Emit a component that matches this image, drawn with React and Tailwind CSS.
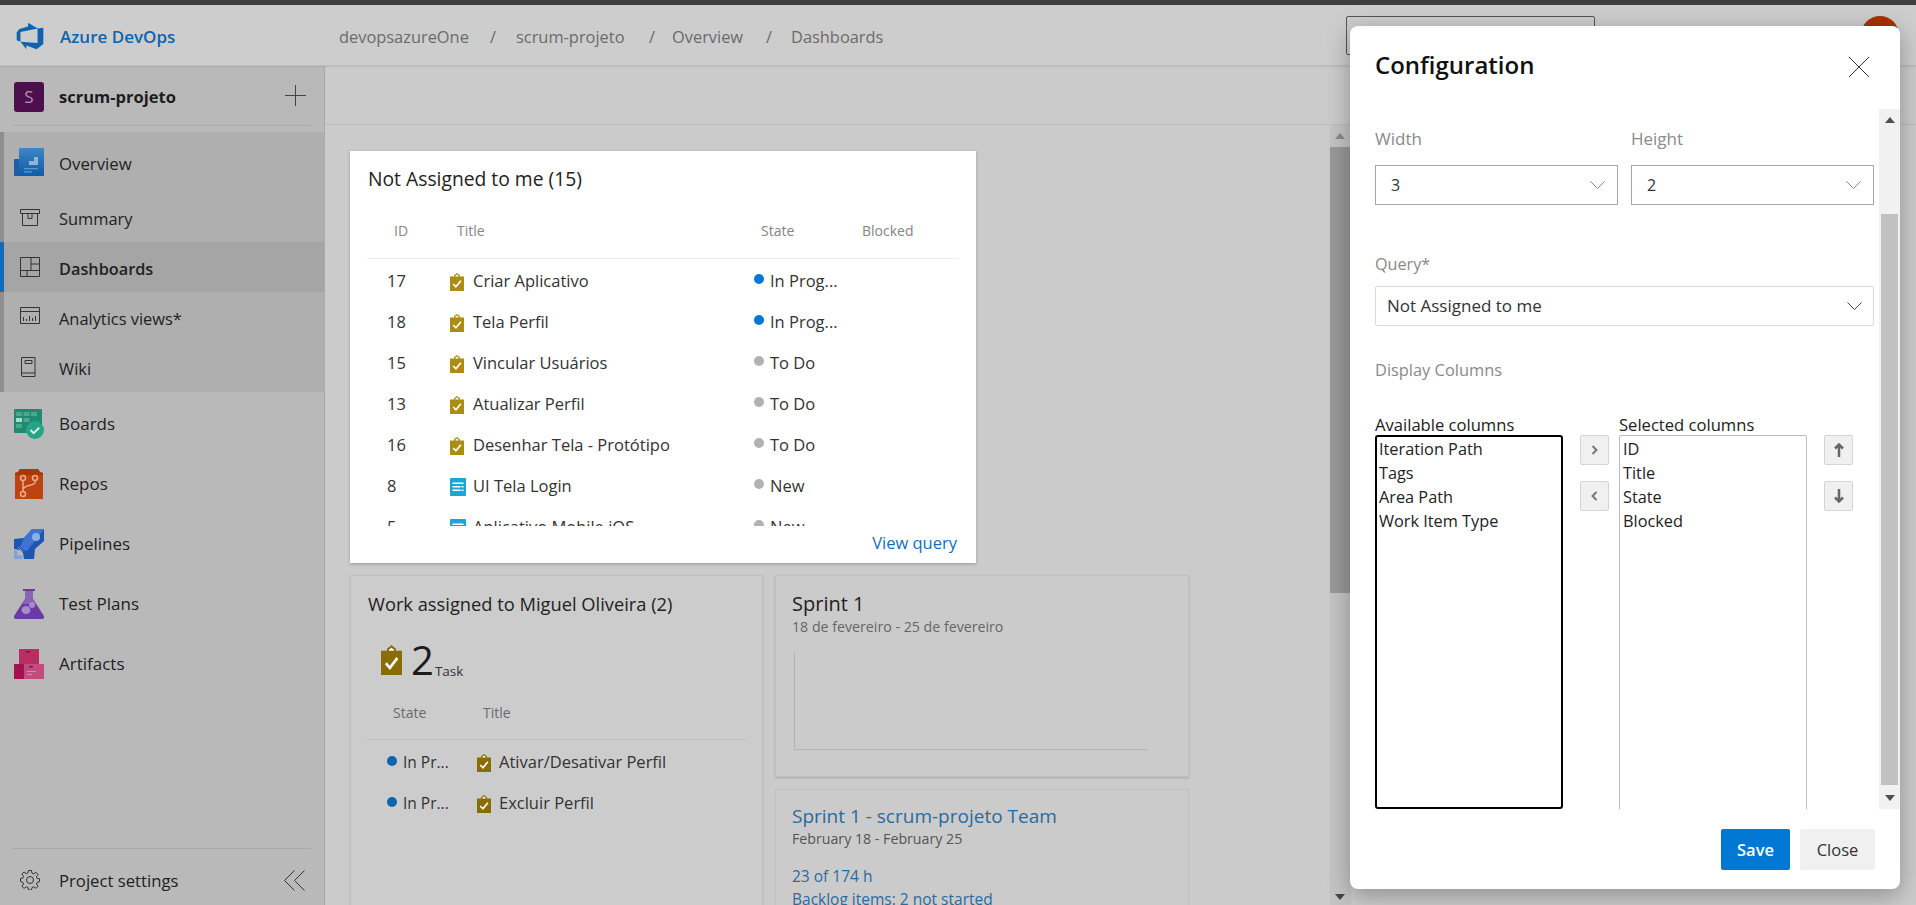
import React from "react";

const F = { fontFamily: '"Open Sans","Noto Sans",sans-serif' };

const Task = ({ w = 14, h = 18, c = "#ab8d12" }) => (
  <svg width={w} height={h} viewBox="0 0 14 18" preserveAspectRatio="none" className="shrink-0">
    <path d="M0 3.500h4V2.200L7 0l3 2.200v1.300h4V18H0z" fill={c} />
    <path d="M5.300 3.500V2.800L7 1.600l1.700 1.200v.7z" fill="#fff" />
    <path d="M3.200 11l2.700 2.800 5-6" fill="none" stroke="#fff" strokeWidth="1.700" />
  </svg>
);

const Req = () => (
  <svg width="16" height="18" viewBox="0 0 16 18" className="shrink-0">
    <rect width="16" height="18" rx="1" fill="#1ea5d8" />
    <path d="M2.500 4.500h11v1.400h-11zM2.500 8h8v1.400h-8zM11.500 8h2v1.400h-2zM2.500 11.500h8v1.400h-8zM11.500 11.500h2v1.400h-2z" fill="#fff" />
  </svg>
);

const Line = ({ children, className = "" }) => (
  <svg width="20" height="20" viewBox="0 0 20 20" fill="none" stroke="#333" strokeWidth="1" className={"shrink-0 " + className}>{children}</svg>
);

const Chev = ({ c = "#777" }) => (
  <svg width="15" height="9" viewBox="0 0 15 9" fill="none" stroke={c} strokeWidth="1"><path d="M.5.5l7 7 7-7" /></svg>
);

const NavIcons = {
  Overview: (
    <svg width="30" height="28" viewBox="0 0 30 28">
      <defs><linearGradient id="ov" x1="0" y1="0" x2="0" y2="1"><stop offset="0" stopColor="#3f86c6" /><stop offset="1" stopColor="#0f5ba8" /></linearGradient></defs>
      <rect x="0" y="11" width="6" height="17" rx="1" fill="#1c5fa6" />
      <rect x="5" y="0" width="25" height="28" rx="1" fill="url(#ov)" />
      <path d="M10 17h5v-4h5V9h4v8z" fill="#8eb6da" />
      <path d="M10 20h14v1.200H10zM10 23.300h8v1.200h-8z" fill="#5f97cc" />
    </svg>
  ),
  Summary: <Line><path d="M.5 2.500h19v4H.5zM2.500 6.500v12h15v-12M8 6.500v5h4v-5" /></Line>,
  Dashboards: <Line><path d="M.5 .5h19v19H.5zM11 .5v13M11 7h8.500M.5 13.500h19M7 13.500v6" /></Line>,
  Analytics: <Line><path d="M.5 .5h19v16H.5zM.5 4.500h19M3.500 14v-4M6.500 14v-2M9.500 14v-5M12.500 14v-3M15.500 14v-5" /></Line>,
  Wiki: <Line><path d="M1.500 .5h13.500v19H3a1.500 1.500 0 0 1-1.500-1.500zM1.500 16h13.500M5 3.500h7v3H5z" /></Line>,
  Boards: (
    <svg width="30" height="30" viewBox="0 0 30 30">
      <rect width="28" height="24" rx="1" fill="#1f8a70" />
      <path d="M2 3h6v4H2zM9.500 3h6v4h-6zM17 3h6v4h-6z" fill="#4aa88d" />
      <path d="M2 9h6v4H2z" fill="#a5dccb" /><path d="M9.500 9h6v4h-6z" fill="#4aa88d" /><path d="M2 15h6v4H2z" fill="#4aa88d" />
      <circle cx="21" cy="21" r="9" fill="#24a586" />
      <path d="M16.500 21l3.200 3.200 5.500-5.500" fill="none" stroke="#d9efe8" strokeWidth="2" />
    </svg>
  ),
  Repos: (
    <svg width="30" height="30" viewBox="0 0 30 30">
      <path d="M1 4l3-1 2-3h18l2 3 3 1v26H1z" fill="#bd4310" />
      <path d="M1 4l3-1 2-3h18l2 3 3 1v2H1z" fill="#a53a08" />
      <g fill="none" stroke="#eba98b" strokeWidth="1.500"><circle cx="9" cy="9" r="2.500" /><circle cx="21" cy="9" r="2.500" /><circle cx="9" cy="25" r="2.500" /><path d="M9 11.500v11M21 11.500v2c0 3-12 2.500-12 7" /></g>
    </svg>
  ),
  Pipelines: (
    <svg width="30" height="30" viewBox="0 0 30 30">
      <path d="M0 10l10-1 8-9h12v12l-9 8-1 10H10l-1-6-3-3-6-1z" fill="#1e55b3" />
      <path d="M10 9l8-9h12L13 22l-4-1-3-3z" fill="#3f73cf" />
      <circle cx="22" cy="8" r="4" fill="#8cb0e6" />
      <path d="M0 22h3v5h5v3H0zM4 18l5 5" fill="#7ea1dd" stroke="#7ea1dd" />
    </svg>
  ),
  "Test Plans": (
    <svg width="30" height="30" viewBox="0 0 30 30">
      <path d="M9 0h12v2h-2v8l11 17c.6 1.500-.5 3-2 3H2c-1.500 0-2.600-1.500-2-3l11-17V2H9z" fill="#6a3ba6" />
      <path d="M11 2h8v8l3 5H8l3-5z" fill="#8a63b8" />
      <ellipse cx="12" cy="21" rx="4.500" ry="4" fill="#a68bcb" /><circle cx="18" cy="16" r="3" fill="#a68bcb" />
    </svg>
  ),
  Artifacts: (
    <svg width="30" height="30" viewBox="0 0 30 30">
      <rect x="5" y="0" width="20" height="16" fill="#b92d62" />
      <rect x="0" y="15" width="10" height="15" fill="#a21450" />
      <rect x="10" y="15" width="20" height="15" fill="#c44b7e" />
      <path d="M12 2h4v1.500h-4zM5 17h3v1.500H5zM15 17h4v1.500h-4z" fill="#7b1742" />
      <path d="M13 22h9v1h-9zM13 25h5v1h-5z" fill="#dc8bab" />
    </svg>
  ),
};

const Sub = ({ name, label, active }) => (
  <div className={"flex items-center relative h-[50px] " + (active ? "bg-[#a5a5a5]" : "")}>
    {active && <div className="absolute left-0 top-0 bottom-0 w-[4px] bg-[#0f6cbd] rounded-r-[1px]" />}
    <div className="w-[59px] flex justify-center shrink-0">{NavIcons[name]}</div>
    <span className={"pt-[4px] text-[#222] " + (active ? "text-[16.300px] font-semibold" : "text-[16.400px]")}>{label || name}</span>
  </div>
);

const Main = ({ name }) => (
  <div className="flex items-center h-[60px]">
    <div className="w-[59px] pl-[14px] shrink-0 flex">{NavIcons[name]}</div>
    <span className="text-[17px] text-[#222]">{name}</span>
  </div>
);

const rows = [
  ["17", "Criar Aplicativo", "In Prog...", "b", "t"],
  ["18", "Tela Perfil", "In Prog...", "b", "t"],
  ["15", "Vincular Usuários", "To Do", "g", "t"],
  ["13", "Atualizar Perfil", "To Do", "g", "t"],
  ["16", "Desenhar Tela - Protótipo", "To Do", "g", "t"],
  ["8", "UI Tela Login", "New", "g", "r"],
  ["5", "Aplicativo Mobile iOS", "New", "g", "r"],
];

const Arrow = ({ d, c = "#555" }) => (
  <svg width="10" height="6" viewBox="0 0 10 6"><path d={d === "u" ? "M0 6L5 0l5 6z" : "M0 0l5 6 5-6z"} fill={c} /></svg>
);

const SmallBtn = ({ children }) => (
  <div className="w-[29px] h-[30px] bg-[#f0f0f0] border border-[#d4d4d4] rounded-[2px] flex items-center justify-center">{children}</div>
);

const Select = ({ v }) => (
  <div className="w-[243px] h-[40px] border border-[#a6a6a6] flex items-center justify-between pl-[15px] pr-[12px] text-[16px] text-[#333]">
    <span>{v}</span><Chev c="#888" />
  </div>
);

const ListBox = ({ items, focus }) => (
  <div className={"w-[188px] text-[16.300px] leading-[24px] text-[#222] bg-white " + (focus ? "h-[374px] border-2 border-black rounded-[3px] pl-[2px]" : "h-[390px] border border-[#bdbdbd] rounded-[2px] pl-[3px] pt-[1px]")}>
    {items.map((i) => <div key={i} className="whitespace-nowrap">{i}</div>)}
  </div>
);

export default function App() {
  return (
    <div className="relative w-full h-screen overflow-hidden bg-[#cbcbcb] flex flex-col" style={F}>
      <div className="h-[5px] bg-[#3f3f3f] shrink-0" />
      <header className="h-[61px] shrink-0 flex items-center bg-[#cdcdcd] border-b border-[#bcbcbc] relative shadow-[0_1px_2px_rgba(0,0,0,.08)]">
        <div className="w-[60px] pl-[15px] pt-[1px] flex">
          <svg width="30" height="30" viewBox="0 0 18 18"><path d="M17 4v9.740l-4 3.280-6.200-2.260V17L3.290 12.410l10.230.8V4.440zm-3.410.49L7.850 1V3.290L2.580 4.840 1 6.870v4.610l2.260 1V6.570z" fill="#0f63ad" /></svg>
        </div>
        <span className="pt-[4px] text-[17px] font-semibold text-[#0f63ad] w-[279px]">Azure DevOps</span>
        <nav className="pt-[4px] flex text-[16.400px] text-[#6b6b6b] whitespace-nowrap">
          <span className="w-[151px]">devopsazureOne</span>
          <span className="w-[26px]">/</span>
          <span className="w-[133px]">scrum-projeto</span>
          <span className="w-[23px]">/</span>
          <span className="w-[94px]">Overview</span>
          <span className="w-[25px]">/</span>
          <span>Dashboards</span>
        </nav>
        <div className="absolute left-[1346px] top-[11px] w-[249px] h-[39px] border border-[#555] rounded-[2px]" />
        <div className="absolute left-[1861px] top-[11px] w-[38px] h-[38px] rounded-full bg-[#a83200]" />
      </header>

      <div className="flex flex-1 min-h-0">
        <aside className="w-[325px] shrink-0 bg-[#b9b9b9] border-r border-[#a8a8a8] flex flex-col">
          <div className="h-[60px] flex items-center relative shrink-0 mx-[13px] border-b border-[#a9a9a9] pt-[3px]">
            <div className="w-[30px] h-[30px] ml-[1px] rounded-[3px] bg-[#4d0f4d] text-[#b58db5] text-[17px] flex items-center justify-center">S</div>
            <span className="ml-[15px] text-[16.500px] font-bold text-[#1d1d1d] flex-1">scrum-projeto</span>
            <svg width="21" height="21" viewBox="0 0 21 21" className="mr-[5px] mb-[3px]" stroke="#444" strokeWidth="1"><path d="M0 10.500h21M10.500 0v21" /></svg>
          </div>
          <div className="mt-[6px] h-[260px] shrink-0 bg-[#afafaf] relative">
            <div className="absolute left-0 top-0 bottom-0 w-[4px] bg-[#8f8f8f]" />
            <div className="flex items-center h-[60px]">
              <div className="w-[59px] pl-[14px] shrink-0 flex relative">{NavIcons.Overview}</div>
              <span className="pt-[4px] text-[16.800px] text-[#222]">Overview</span>
            </div>
            <Sub name="Summary" />
            <Sub name="Dashboards" active />
            <Sub name="Analytics" label="Analytics views*" />
            <Sub name="Wiki" />
          </div>
          <div className="mt-[2px]">
            {["Boards", "Repos", "Pipelines", "Test Plans", "Artifacts"].map((n) => <Main key={n} name={n} />)}
          </div>
          <div className="mt-auto mx-[13px] border-t border-[#a9a9a9] h-[57px] flex items-center shrink-0 pt-[6px]">
            <svg width="20" height="20" viewBox="0 0 20 20" fill="none" stroke="#333" className="ml-[7px]">
              <circle cx="10" cy="10" r="3.500" />
              <path d="M8.500.5h3l.5 2.700 1.700.7 2.300-1.600 2.100 2.100-1.600 2.300.7 1.700 2.300.4v3l-2.300.5-.7 1.700 1.600 2.300-2.100 2.100-2.300-1.600-1.700.7-.5 2.500h-3l-.5-2.500-1.700-.7-2.300 1.600-2.100-2.100 1.600-2.300-.7-1.700L.5 11.500v-3l2.300-.4.7-1.700-1.600-2.300 2.100-2.100 2.300 1.600 1.700-.7z" />
            </svg>
            <span className="ml-[19px] pt-[2px] text-[16.700px] text-[#222] flex-1">Project settings</span>
            <svg width="21" height="21" viewBox="0 0 21 21" fill="none" stroke="#333" className="mr-[6px]"><path d="M10.500.5l-10 10 10 10M20.500.5l-10 10 10 10" /></svg>
          </div>
        </aside>

        <div className="flex-1 min-w-0 flex flex-col">
          <div className="h-[59px] shrink-0 border-b border-[#bdbdbd]" />
          <div className="flex-1 min-h-0 flex overflow-hidden">
            <main className="w-[1005px] pl-[25px] pt-[26px] shrink-0 overflow-hidden">
              <section className="w-[626px] h-[412px] bg-white shadow-[0_1px_3px_rgba(0,0,0,.25)] flex flex-col relative">
                <h2 className="pl-[18px] pt-[15px] h-[54px] text-[19.300px] leading-[26px] text-[#222] font-normal">Not Assigned to me (15)</h2>
                <div className="mx-[17px] h-[54px] border-b border-[#ececec] flex items-center pb-[2px] text-[14px] text-[#858585]">
                  <span className="w-[90px] pl-[27px]">ID</span>
                  <span className="w-[304px]">Title</span>
                  <span className="w-[101px]">State</span>
                  <span>Blocked</span>
                </div>
                <div className="flex-1 min-h-0 overflow-hidden mb-[37px] mt-[2px]">
                  {rows.map((r) => (
                    <div key={r[0]} className="h-[41px] flex items-center ml-[37px] text-[16.500px] text-[#333]">
                      <span className="w-[63px] shrink-0">{r[0]}</span>
                      <span className="w-[23px] shrink-0 flex">{r[4] === "t" ? <Task /> : <Req />}</span>
                      <span className="w-[281px] shrink-0 whitespace-nowrap">{r[1]}</span>
                      <span className={"w-[10px] h-[10px] rounded-full shrink-0 mr-[6px] -mt-[6px] " + (r[3] === "b" ? "bg-[#0078d4]" : "bg-[#b2b2b2]")} />
                      <span className="whitespace-nowrap">{r[2]}</span>
                    </div>
                  ))}
                </div>
                <a className="absolute right-[19px] bottom-[7px] text-[16.500px] text-[#106ebe]">View query</a>
              </section>

              <div className="mt-[12px] flex gap-[12px] items-start">
                <section className="w-[413px] h-[400px] border border-[#c0c0c0] bg-[#cccccc] shadow-[0_1px_2px_rgba(0,0,0,.12)] shrink-0">
                  <h2 className="pl-[17px] pt-[15px] h-[56px] text-[18.300px] leading-[26px] text-[#222] font-normal whitespace-nowrap">Work assigned to Miguel Oliveira (2)</h2>
                  <div className="flex items-end h-[30px] ml-[30px] mt-[13px]">
                    <Task w={21} h={30} c="#8a6d00" />
                    <span className="ml-[9px] text-[40px] leading-[40px] text-[#1b1b1b] font-normal -mb-[5px]">2</span>
                    <span className="ml-[1px] text-[13.500px] leading-[18px] text-[#333] -mb-[5px]">Task</span>
                  </div>
                  <div className="mt-[20px] mx-[16px] h-[45px] border-b border-[#bdbdbd] flex items-start pt-[7px] text-[14px] text-[#6a6a6a]">
                    <span className="w-[116px] pl-[26px]">State</span>
                    <span>Title</span>
                  </div>
                  <div className="mt-[2px]">
                    {["Ativar/Desativar Perfil", "Excluir Perfil"].map((t) => (
                      <div key={t} className="h-[41px] flex items-center ml-[36px] text-[16.500px] text-[#333] whitespace-nowrap">
                        <span className="w-[10px] h-[10px] rounded-full bg-[#0b66ad] shrink-0 mr-[6px] -mt-[4px]" />
                        <span className="w-[74px] shrink-0 text-[15.500px]">In Pr...</span>
                        <span className="w-[22px] flex shrink-0"><Task c="#8a6d00" /></span>
                        <span>{t}</span>
                      </div>
                    ))}
                  </div>
                </section>

                <div className="w-[414px] shrink-0 flex flex-col gap-[12px]">
                  <section className="h-[202px] border border-[#c0c0c0] shadow-[0_1px_2px_rgba(0,0,0,.18)] pl-[16px] pt-[15px]">
                    <h2 className="text-[20px] leading-[26px] text-[#222] font-normal">Sprint 1</h2>
                    <p className="pt-[1px] text-[14.200px] leading-[18px] text-[#666]">18 de fevereiro - 25 de fevereiro</p>
                    <div className="mt-[16px] ml-[2px] w-[353px] h-[98px] border-l border-b border-[#b3b3b3]" />
                  </section>
                  <section className="h-[200px] border border-[#c0c0c0] pl-[16px] pt-[13px]">
                    <h2 className="text-[19px] leading-[26px] text-[#2b6a9c] font-normal">Sprint 1 - scrum-projeto Team</h2>
                    <p className="pt-[1px] text-[14.200px] leading-[18px] text-[#555]">February 18 - February 25</p>
                    <p className="mt-[16px] text-[15.500px] leading-[24px] text-[#2b6a9c]">23 of 174 h</p>
                    <p className="text-[15.500px] leading-[22px] text-[#2b6a9c]">Backlog items: 2 not started</p>
                  </section>
                </div>
              </div>
            </main>
            <div className="w-[21px] shrink-0 bg-[#c4c4c4] flex flex-col items-center pr-[1px]">
              <div className="h-[22px] flex items-center"><Arrow d="u" c="#888" /></div>
              <div className="h-[446px] w-full bg-[#999999]" />
              <div className="mt-auto h-[16px] flex items-center"><Arrow d="d" c="#444" /></div>
            </div>
          </div>
        </div>
      </div>

      <div className="absolute left-[1350px] top-[26px] w-[550px] h-[863px] bg-white rounded-[8px] shadow-[0_6px_24px_rgba(0,0,0,.3)] flex flex-col overflow-hidden">
        <div className="h-[83px] shrink-0 flex items-start justify-between pl-[25px] pr-[31px] pt-[19px]">
          <h1 className="text-[24px] leading-[40px] font-semibold text-[#111]">Configuration</h1>
          <svg width="20" height="20" viewBox="0 0 20 20" className="mt-[12px]" stroke="#333" strokeWidth="1"><path d="M0 0l20 20M20 0L0 20" /></svg>
        </div>
        <div className="h-[700px] shrink-0 flex">
          <div className="flex-1 min-w-0 overflow-hidden pl-[25px]">
            <div className="pt-[18px] flex gap-[13px]">
              <div className="w-[243px]"><div className="h-[24px] text-[17px] leading-[24px] text-[#8a8a8a]">Width</div><div className="mt-[14px]"><Select v="3" /></div></div>
              <div className="w-[243px]"><div className="h-[24px] text-[17px] leading-[24px] text-[#8a8a8a]">Height</div><div className="mt-[14px]"><Select v="2" /></div></div>
            </div>
            <div className="mt-[47px] h-[24px] text-[16.200px] leading-[24px] text-[#8a8a8a]">Query*</div>
            <div className="mt-[10px] w-[499px] h-[40px] border border-[#d9d9d9] rounded-[2px] flex items-center justify-between pl-[11px] pr-[11px] text-[17px] text-[#333]">
              <span>Not Assigned to me</span><Chev c="#444" />
            </div>
            <div className="mt-[32px] h-[24px] text-[16.400px] leading-[24px] text-[#8a8a8a]">Display Columns</div>
            <div className="mt-[32px] flex items-start">
              <div className="w-[188px] shrink-0">
                <div className="h-[21px] text-[16.600px] leading-[21px] text-[#222] whitespace-nowrap">Available columns</div>
                <ListBox focus items={["Iteration Path", "Tags", "Area Path", "Work Item Type"]} />
              </div>
              <div className="ml-[17px] mt-[21px] flex flex-col gap-[16px] shrink-0">
                <SmallBtn><svg width="7" height="10" viewBox="0 0 7 10" fill="none" stroke="#777" strokeWidth="2"><path d="M1.500 1l4 4-4 4" /></svg></SmallBtn>
                <SmallBtn><svg width="7" height="10" viewBox="0 0 7 10" fill="none" stroke="#777" strokeWidth="2"><path d="M5.500 1l-4 4 4 4" /></svg></SmallBtn>
              </div>
              <div className="ml-[10px] w-[188px] shrink-0">
                <div className="h-[21px] text-[16.600px] leading-[21px] text-[#222] whitespace-nowrap">Selected columns</div>
                <ListBox items={["ID", "Title", "State", "Blocked"]} />
              </div>
              <div className="ml-[17px] mt-[21px] flex flex-col gap-[16px] shrink-0">
                <SmallBtn><svg width="10" height="14" viewBox="0 0 10 14" fill="none" stroke="#666" strokeWidth="2.500"><path d="M5 14V2M1 5.500l4-4 4 4" /></svg></SmallBtn>
                <SmallBtn><svg width="10" height="14" viewBox="0 0 10 14" fill="none" stroke="#666" strokeWidth="2.500"><path d="M5 0v12M1 8.500l4 4 4-4" /></svg></SmallBtn>
              </div>
            </div>
          </div>
          <div className="w-[21px] shrink-0 bg-[#f1f1f1] flex flex-col items-center">
            <div className="h-[22px] flex items-center"><Arrow d="u" c="#505050" /></div>
            <div className="mt-[83px] h-[571px] w-[17px] bg-[#c1c1c1]" />
            <div className="mt-auto h-[22px] flex items-center"><Arrow d="d" c="#505050" /></div>
          </div>
        </div>
        <div className="flex-1 flex justify-end items-start pt-[20px] pr-[25px] gap-[10px]">
          <button className="w-[69px] h-[41px] pt-[2px] rounded-[2px] bg-[#0078d4] text-white text-[16.500px] font-semibold">Save</button>
          <button className="w-[75px] h-[41px] pt-[2px] rounded-[2px] bg-[#f0f0f0] text-[#333] text-[16.500px]">Close</button>
        </div>
      </div>
    </div>
  );
}
